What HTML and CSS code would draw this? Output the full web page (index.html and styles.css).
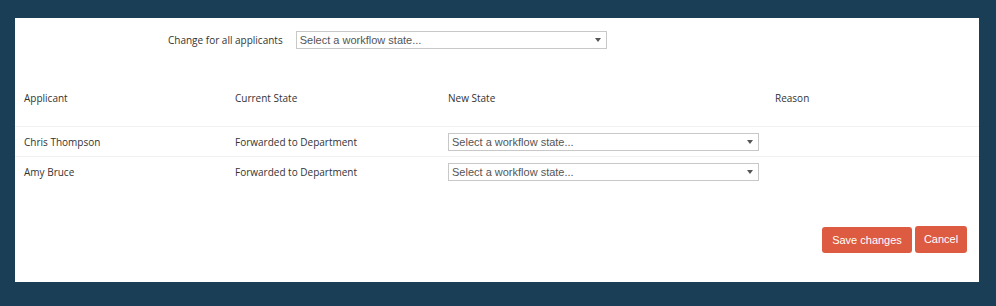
FILE: index.html
```html
<!DOCTYPE html>
<html lang="en">
  <head>
    <meta charset="UTF-8" />
    <meta name="viewport" content="width=device-width, initial-scale=1.0" />
    <title>Bulk workflow change</title>
    <link rel="stylesheet" href="styles.css">
  </head>
  <body>
    <div class="panel">
      <div class="bulk-row">
        <label class="bulk-label">Change for all applicants</label>
        <div class="select-wrap">
          <select class="state-select">
            <option>Select a workflow state...</option>
          </select>
        </div>
      </div>

      <table class="applicants">
        <thead>
          <tr>
            <th class="col-name">Applicant</th>
            <th class="col-current">Current State</th>
            <th class="col-new">New State</th>
            <th>Reason</th>
          </tr>
        </thead>
        <tbody>
          <tr>
            <td>Chris Thompson</td>
            <td>Forwarded to Department</td>
            <td>
              <div class="select-wrap">
                <select class="state-select">
                  <option>Select a workflow state...</option>
                </select>
              </div>
            </td>
            <td></td>
          </tr>
          <tr>
            <td>Amy Bruce</td>
            <td>Forwarded to Department</td>
            <td>
              <div class="select-wrap">
                <select class="state-select">
                  <option>Select a workflow state...</option>
                </select>
              </div>
            </td>
            <td></td>
          </tr>
        </tbody>
      </table>

      <div class="actions">
        <button class="btn btn-save">Save changes</button>
        <button class="btn btn-cancel">Cancel</button>
      </div>
    </div>
  </body>
</html>
```

FILE: styles.css
```css
:root {
  --page-bg: #1b3e57;
  --text-color: #333;
  --line-color: #f1f1f1;
  --select-border: #c8c8c8;
  --accent: #dd5b40;
}

* {
  margin: 0;
  padding: 0;
  box-sizing: border-box;
}

body {
  background-color: var(--page-bg);
  font-family: "Open Sans", "Noto Sans", sans-serif;
  font-size: 10px;
  color: var(--text-color);
  padding: 18px 17px 0 15px;
}

.panel {
  background-color: #fff;
  height: 264px;
  padding-top: 13px;
}

/* top bulk selector */
.bulk-row {
  display: flex;
  align-items: center;
  gap: 13px;
  padding-left: 153px;
}

.bulk-label {
  line-height: 18px;
}

.select-wrap {
  position: relative;
  width: 311px;
  height: 18px;
}

.select-wrap::after {
  content: "";
  position: absolute;
  right: 6px;
  top: 7px;
  border-left: 3px solid transparent;
  border-right: 3px solid transparent;
  border-top: 4px solid #555;
  pointer-events: none;
}

.state-select {
  appearance: none;
  -webkit-appearance: none;
  width: 100%;
  height: 18px;
  border: 1px solid var(--select-border);
  border-radius: 0;
  background-color: #fff;
  font-family: "Liberation Sans", Arial, sans-serif;
  font-size: 11px;
  color: #555;
  padding: 0 0 0 3px;
  line-height: 16px;
}

/* applicants table */
.applicants {
  width: 100%;
  border-collapse: collapse;
  margin-top: 21px;
}

.applicants th {
  font-weight: normal;
  text-align: left;
  line-height: 16px;
  padding: 20px 0;
  border-bottom: 1px solid var(--line-color);
}

.applicants td {
  height: 30px;
  line-height: 16px;
  padding: 0;
  vertical-align: middle;
  border-bottom: 1px solid var(--line-color);
}

.applicants tbody tr:last-child td {
  border-bottom: none;
}

.applicants th:first-child,
.applicants td:first-child {
  padding-left: 9px;
}

.col-name {
  width: 220px;
}

.col-current {
  width: 213px;
}

.col-new {
  width: 327px;
}

/* footer buttons */
.actions {
  display: flex;
  justify-content: flex-end;
  align-items: flex-end;
  gap: 3px;
  padding-right: 12px;
  margin-top: 39px;
}

.btn {
  background-color: var(--accent);
  color: #fff;
  border: none;
  border-radius: 3px;
  font-family: "Liberation Sans", Arial, sans-serif;
  font-size: 11px;
  height: 26px;
  padding: 0;
  cursor: pointer;
}

.btn-save {
  width: 90px;
}

.btn-cancel {
  width: 52px;
  height: 27px;
}
```
